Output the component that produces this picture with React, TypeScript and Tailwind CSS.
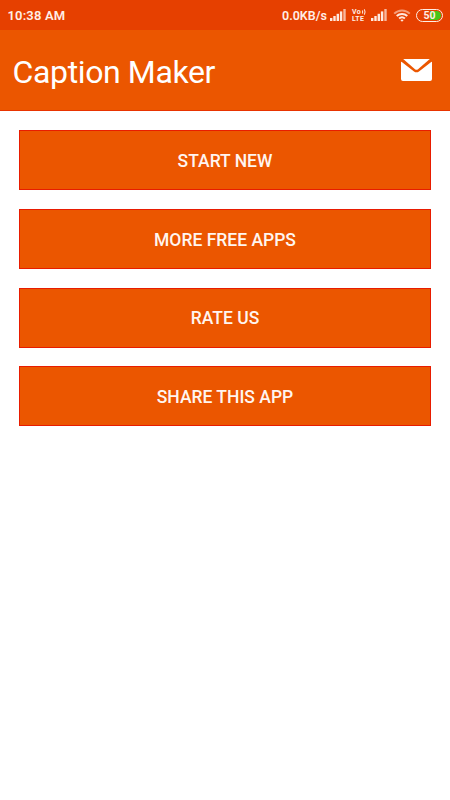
import React from 'react';

const SignalIcon: React.FC = () => (
  <svg width="16" height="12" viewBox="0 0 16 12" fill="#ffe9df">
    <rect x="0" y="9" width="2.4" height="3" />
    <rect x="3.3" y="7" width="2.4" height="5" />
    <rect x="6.6" y="4.8" width="2.4" height="7.2" />
    <rect x="9.9" y="2.4" width="2.4" height="9.6" />
    <rect x="13.3" y="0" width="2.4" height="12" opacity="0.7" />
  </svg>
);

const WifiIcon: React.FC = () => (
  <svg width="18" height="13" viewBox="0 0 18 13" fill="none" stroke="#ffe9df" strokeWidth="2">
    <path d="M1.2 4.6C5.6.3 12.4.3 16.8 4.6" opacity="0.55" />
    <path d="M3.7 7.1c3-2.8 7.6-2.8 10.6 0" />
    <path d="M6.1 9.5c1.7-1.5 4.1-1.5 5.8 0" />
    <path d="M9 12.8 7.3 11.1c1-.9 2.4-.9 3.4 0z" fill="#ffe9df" stroke="none" />
  </svg>
);

// small radio wave mark that follows "Vo"
const WaveIcon: React.FC = () => (
  <svg width="4" height="6" viewBox="0 0 4 6" fill="none" stroke="#ffeee6" strokeWidth="1">
    <path d="M.6 1.4v3.2M2.4.3q1.3 2.7 0 5.4" />
  </svg>
);

const MailIcon: React.FC = () => (
  <svg width="31" height="22" viewBox="0 0 31 22" fill="#fff">
    <path d="M2.2 0h26.6L17 10.2q-1.5 1.2-3 0z" />
    <path d="M0 3.4q0-1 .8-.4L13 12.4q2.5 1.8 5 0L30.2 3q.8-.6.8.4V20q0 2-2 2H2q-2 0-2-2z" />
  </svg>
);

const StatusBar: React.FC = () => (
  <div className="flex h-[30px] items-center bg-[#e64000] pl-[7.5px] pr-[7px] text-[#ffeee6]">
    <span className="w-[274.5px] text-[13px] font-semibold leading-[31px] tracking-[0.15px]">10:38 AM</span>
    <span className="w-[48px] whitespace-nowrap text-[12.5px] font-semibold leading-[31px]">0.0KB/s</span>
    <SignalIcon />
    <div className="ml-[6px] flex w-[19px] flex-col gap-px text-[7px] font-bold tracking-[0.3px]">
      <div className="flex h-[6px] items-center gap-px leading-[6px]">
        <span className="leading-[6px]">Vo</span>
        <WaveIcon />
      </div>
      <span className="h-[6px] leading-[6px]">LTE</span>
    </div>
    <SignalIcon />
    <div className="ml-[6px]">
      <WifiIcon />
    </div>
    <div className="ml-auto flex h-[13px] w-[27px] rounded-full border border-[#ffeee6] p-px">
      <div className="flex w-full items-center justify-center rounded-full bg-linear-to-r from-transparent from-50% to-[#45c51a] to-50% text-[10.5px] font-bold leading-[9px]">
        50
      </div>
    </div>
  </div>
);

const App: React.FC = () => {
  const actions = ['START NEW', 'MORE FREE APPS', 'RATE US', 'SHARE THIS APP'];

  return (
    <div className="h-[800px] w-[450px] overflow-hidden bg-white font-['Roboto',sans-serif]">
      <StatusBar />
      <header className="flex h-[81px] items-center justify-between border-b border-[#e83400] bg-[#eb5600] pl-[12.6px] pr-[18px]">
        <h1 className="mt-1 text-[32px] leading-10 tracking-[-0.38px] text-white">Caption Maker</h1>
        <button aria-label="Mail">
          <MailIcon />
        </button>
      </header>
      <main className="flex flex-col gap-[18.75px] px-[19px] pt-[19px]">
        {actions.map((action) => (
          <button
            key={action}
            className="h-[60px] w-full border border-[#e81c00] bg-[#eb5600] pt-[2px] text-[17.5px] font-medium text-[#fff5f0]"
          >
            {action}
          </button>
        ))}
      </main>
    </div>
  );
};

export default App;
